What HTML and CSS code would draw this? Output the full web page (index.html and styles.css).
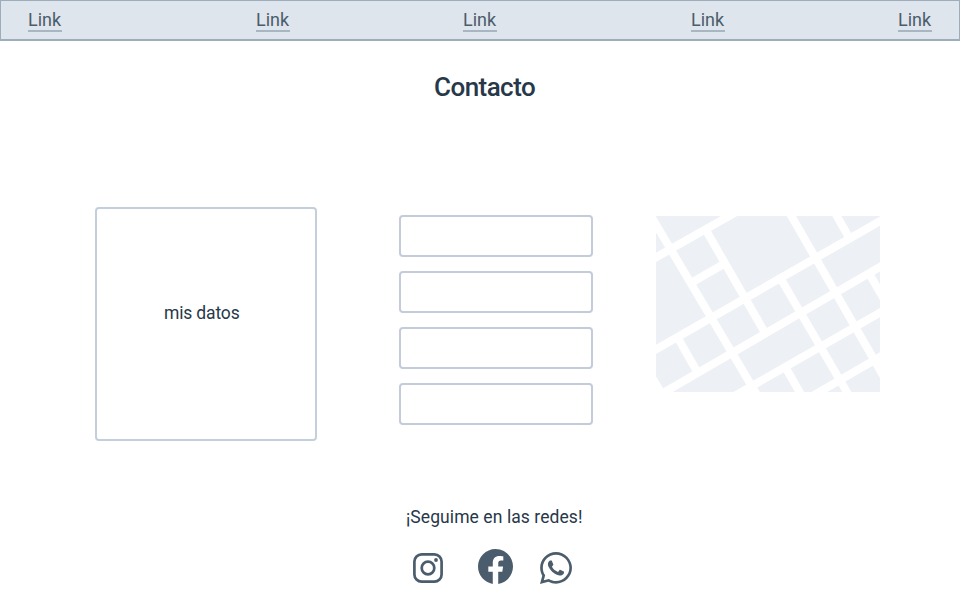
FILE: index.html
```html
<!DOCTYPE html>
<html lang="es">
<head>
<meta charset="utf-8">
<title>Contacto</title>
<link rel="stylesheet" href="styles.css">
</head>
<body>
<nav class="nav">
  <a class="nav-link">Link</a>
  <a class="nav-link">Link</a>
  <a class="nav-link">Link</a>
  <a class="nav-link">Link</a>
  <a class="nav-link">Link</a>
</nav>
<h1 class="title">Contacto</h1>
<main class="content">
  <section class="card"><span>mis datos</span></section>
  <form class="form">
    <div class="field"></div>
    <div class="field"></div>
    <div class="field"></div>
    <div class="field"></div>
  </form>
  <svg class="map" viewBox="0 0 224 176">
    <rect width="224" height="176" fill="#edf0f5"/>
    <g stroke="#fff" stroke-width="8" fill="none">
      <path d="M-10 47 L82 -5"/>
      <path d="M-10 139 L234 -.5"/>
      <path d="M-5 184 L234 45"/>
      <path d="M75 182 L234 91"/>
      <path d="M153 182 L234 135"/>
      <path d="M37.5 65.5 L67 48.5"/>
      <path d="M-8 -5 L104 184"/>
      <path d="M51 16 L108.5 116"/>
      <path d="M132.5 -5 L239 180"/>
      <path d="M125.5 64 L195.5 184"/>
      <path d="M178 -5 L193 21.5"/>
      <path d="M214 59 L232 90"/>
      <path d="M22.5 123 L41.5 156.5"/>
      <path d="M-6 158 L7 180"/>
      <path d="M130.5 153 L148 184"/>
    </g>
  </svg>
</main>
<footer class="social">
  <p class="social-text">¡Seguime en las redes!</p>
  <div class="icons">
    <svg class="instagram" viewBox="0 0 30 30">
      <rect x="1.4" y="1.4" width="27.2" height="27.2" rx="7.2" fill="none" stroke="#4b5d6c" stroke-width="2.7"/>
      <circle cx="15" cy="15" r="6.3" fill="none" stroke="#4b5d6c" stroke-width="2.7"/>
      <circle cx="23" cy="7" r="1.9" fill="#4b5d6c"/>
    </svg>
    <svg class="facebook" viewBox="0 0 24 24">
      <path fill="#4b5d6c" d="M24 12.073c0-6.627-5.373-12-12-12s-12 5.373-12 12c0 5.99 4.388 10.954 10.125 11.854v-8.385H7.078v-3.47h3.047V9.43c0-3.007 1.792-4.669 4.533-4.669 1.312 0 2.686.235 2.686.235v2.953H15.83c-1.491 0-1.956.925-1.956 1.874v2.25h3.328l-.532 3.47h-2.796v8.385C19.612 23.027 24 18.062 24 12.073z"/>
    </svg>
    <svg class="whatsapp" viewBox="0 0 448 448">
      <path fill="#4b5d6c" d="M380.9 65.1C339 23.1 283.2 0 223.9 0 101.5 0 1.9 99.6 1.9 222c0 39.1 10.2 77.3 29.6 111L0 448l117.7-30.9c32.4 17.7 68.9 27 106.1 27h.1c122.3 0 224.1-99.6 224.1-222 0-59.3-25.2-115-67.1-157zm-157 341.6c-33.2 0-65.7-8.9-94-25.7l-6.7-4-69.8 18.3L72 327.2l-4.4-7c-18.5-29.4-28.2-63.3-28.2-98.2 0-101.7 82.8-184.5 184.6-184.5 49.3 0 95.6 19.2 130.4 54.1 34.8 34.9 56.2 81.2 56.1 130.5 0 101.8-84.9 184.6-186.6 184.6zm101.2-138.2c-5.5-2.8-32.8-16.2-37.9-18-5.1-1.9-8.8-2.8-12.5 2.8-3.7 5.6-14.3 18-17.6 21.8-3.2 3.7-6.5 4.2-12 1.4-32.6-16.3-54-29.1-75.5-66-5.7-9.8 5.7-9.1 16.3-30.3 1.8-3.7.9-6.9-.5-9.7-1.4-2.8-12.5-30.1-17.1-41.2-4.5-10.8-9.1-9.3-12.5-9.5-3.2-.2-6.9-.2-10.6-.2-3.7 0-9.7 1.4-14.8 6.9-5.1 5.6-19.4 19-19.4 46.3 0 27.3 19.9 53.7 22.6 57.4 2.8 3.7 39.1 59.7 94.8 83.8 35.2 15.2 49 16.5 66.6 13.9 10.7-1.6 32.8-13.4 37.4-26.4 4.6-13 4.6-24.1 3.2-26.4-1.3-2.5-5-3.9-10.5-6.6z"/>
    </svg>
  </div>
</footer>
</body>
</html>
```

FILE: styles.css
```css
* { box-sizing: border-box; }
body {
  margin: 0;
  width: 960px;
  height: 600px;
  overflow: hidden;
  background: #fff;
  color: #273849;
  font-family: Roboto, "Liberation Sans", sans-serif;
}
.nav {
  display: grid;
  grid-template-columns: 228px 207px 228px 207px 34px;
  align-items: start;
  height: 41px;
  padding: 9px 0 0 27px;
  background: #dfe5ed;
  border: 1px solid #9cadbc;
  border-bottom-width: 2px;
}
.nav-link {
  width: 34px;
  height: 22px;
  line-height: 20px;
  font-size: 18px;
  color: #4b5d6c;
  border-bottom: 2px solid #a8b5c3;
  white-space: nowrap;
}
.title {
  margin: 30px 0 0 434px;
  height: 32px;
  line-height: 32px;
  font-size: 26px;
  font-weight: 500;
  letter-spacing: -0.55px;
}
.content {
  display: flex;
  align-items: flex-start;
  height: 234px;
  margin: 104px 0 0 95px;
}
.card {
  width: 222px;
  height: 234px;
  padding: 93px 0 0 67px;
  border: 2px solid #c3cfda;
  border-radius: 4px;
  font-size: 17.5px;
  letter-spacing: -0.15px;
  line-height: 22px;
}
.form {
  display: flex;
  flex-direction: column;
  gap: 14px;
  width: 194px;
  margin: 8px 0 0 82px;
}
.field {
  height: 42px;
  border: 2px solid #c4ccd9;
  border-radius: 4px;
}
.map {
  display: block;
  width: 224px;
  height: 176px;
  margin: 9px 0 0 63px;
}
.social { padding: 65px 0 0 406px; }
.social-text {
  margin: 0;
  font-size: 17.5px;
  letter-spacing: 0.08px;
  line-height: 22px;
  white-space: nowrap;
}
.icons {
  display: flex;
  margin: 20px 0 0 7px;
}
.instagram { width: 30px; height: 30px; margin-top: 5px; }
.facebook { width: 35px; height: 35px; margin: 1px 0 0 35.4px; }
.whatsapp { width: 32px; height: 32px; margin: 4px 0 0 26.6px; }
```
